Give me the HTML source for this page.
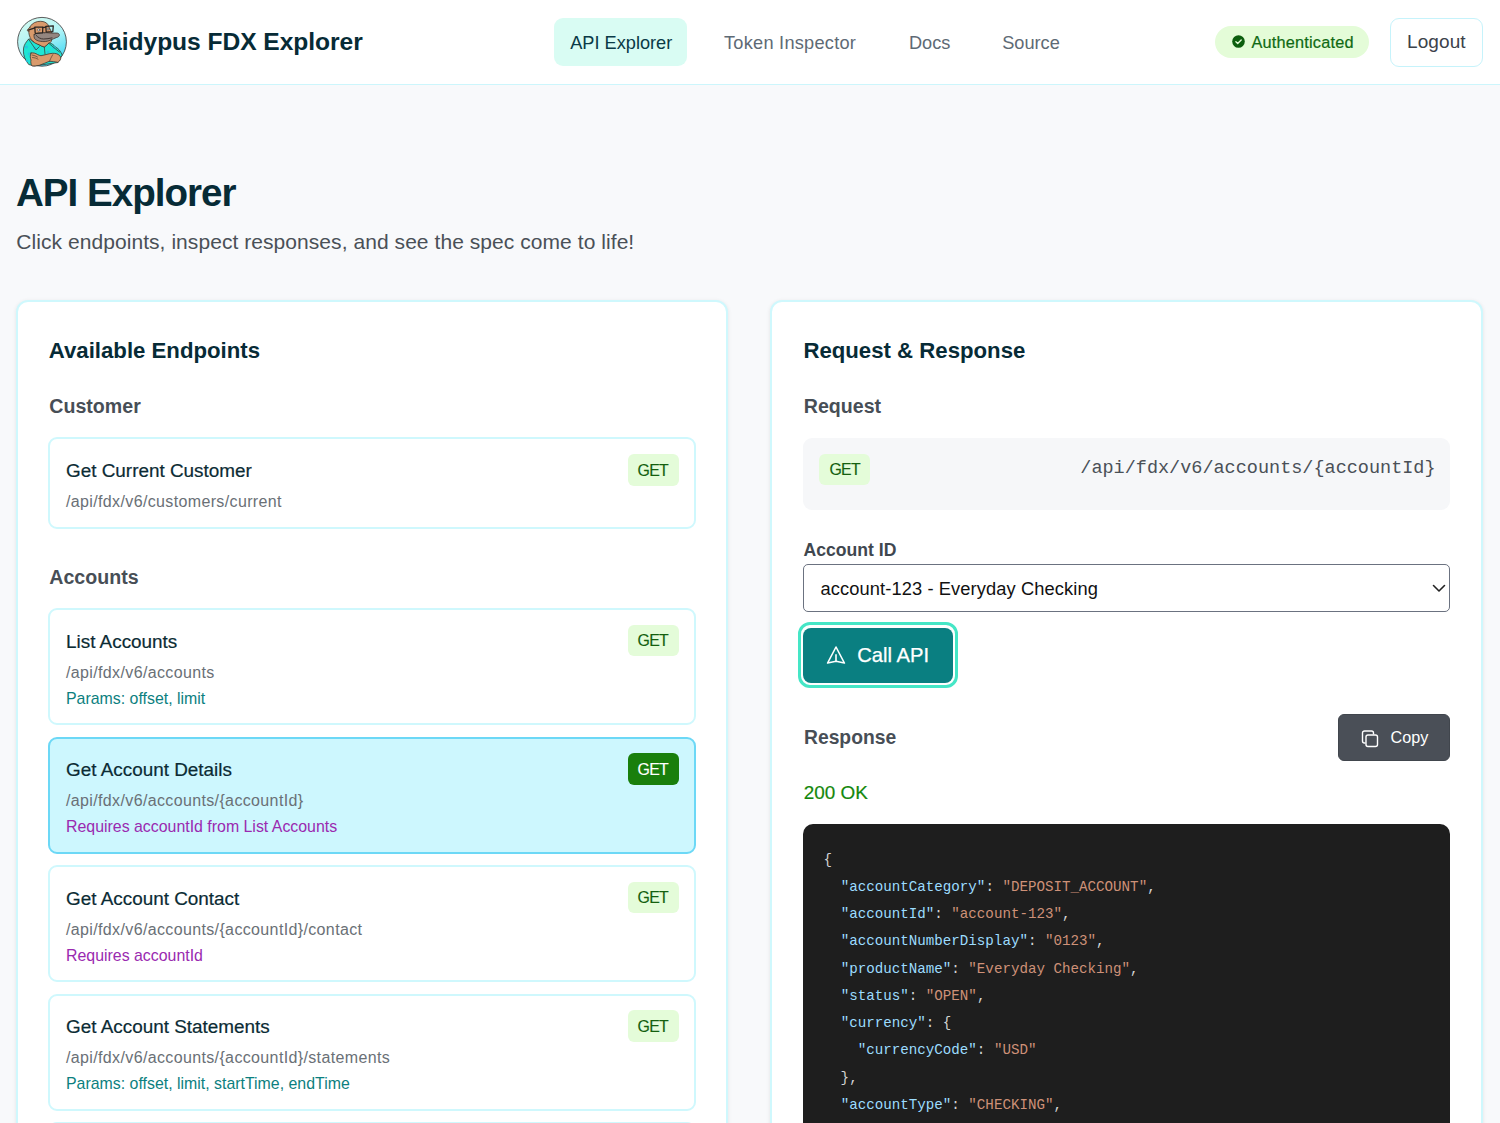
<!DOCTYPE html>
<html><head><meta charset="utf-8">
<style>
*{box-sizing:border-box;margin:0;padding:0}
html,body{width:1500px;height:1123px;overflow:hidden}
body{background:#f8f9fb;font-family:"Liberation Sans",sans-serif;position:relative}
.abs{position:absolute;white-space:nowrap}
</style></head><body>
<div class="abs" style="left:0.00px;top:0.00px;width:1500.00px;height:85.00px;background:#fff;border-bottom:1px solid #ccf6fc;"></div>
<svg class="abs" style="left:14px;top:14px" width="56" height="56" viewBox="0 0 56 56">
<defs>
<linearGradient id="lg" x1="0.3" y1="0.05" x2="0.75" y2="0.95"><stop offset="0" stop-color="#cdf9f1"/><stop offset="0.45" stop-color="#b0f3f6"/><stop offset="1" stop-color="#3bd8f5"/></linearGradient>
</defs>
<circle cx="28" cy="27.8" r="24.4" fill="url(#lg)" stroke="#4a4a4a" stroke-width="0.9"/>
<g stroke="#3a302b" stroke-width="0.75" stroke-linejoin="round" stroke-linecap="round">
  <!-- shirt -->
  <path d="M14.7 25 C12 28 10 31 9.6 34 C9 38 9.8 43 12 46.5 L14.7 50.5 L20 52 L44 48.5 L48.2 41 C46.5 37 44.5 34.5 42 33.5 C40 31 37.5 29.5 35.3 28.6 L30.3 33 L25.3 31 Z" fill="#1fe6d4"/>
  <g fill="#2bbfe3" stroke="none" opacity="0.75">
    <circle cx="12.5" cy="33" r="1.6"/><circle cx="15" cy="40" r="1.4"/><circle cx="21" cy="34" r="1.5"/>
    <circle cx="40" cy="33.5" r="1.6"/><circle cx="34" cy="38" r="1.3"/><circle cx="13" cy="47" r="1.2"/><circle cx="43" cy="40" r="1.2"/>
  </g>
  <path d="M14.7 25.3 L22 36 L25.3 32.7 M34 28.7 L42 35.3 L45.5 38 M30.3 33 L31 40" fill="none" stroke-width="0.7"/>
  <!-- head + neck -->
  <path d="M19 27.5 C16.5 25.5 15.2 22 14.8 18.5 C14.5 16 14.8 14 16.5 12 C18.5 9 22.5 7.2 26.6 7.3 C30 7.4 32.5 8.5 33.8 10.5 L38 19 L37.5 27 C36.5 28.5 35.5 29.5 35.3 28.6 C33.5 30.5 32 32 30.3 33 C28.5 32.5 26.5 31.8 25.3 30.8 C23 30 20.5 29 19 27.5 Z" fill="#d99a6c"/>
  <path d="M16.5 13.2 C15 14 13.6 15 13.2 16.5 C13.8 17.3 14.6 17.5 15.3 17.3" fill="#d99a6c" stroke-width="0.6"/>
  <!-- bill -->
  <path d="M20.1 20.7 C22 19.3 24.5 18.7 26.8 18.6 C30.5 18.4 34.5 18.9 38 19.1 C40 19.1 42 18.9 43.4 19.1 C45 19.5 45.8 20.6 45.2 21.8 C44.6 23 43.4 23.4 42.8 23.4 C40.5 24.3 38.5 25.3 36.7 26 C34.5 27 32.3 27.6 30 27.6 C27.5 27.6 25.7 27.3 24.1 26.8 C22.3 26.2 20.8 25.2 20.4 24.2 C20 23 19.8 21.6 20.1 20.7 Z" fill="#948680"/>
  <path d="M22 21.2 C24 23.5 26.5 25 29.5 25 C32.5 25 35.5 24.5 38 23.9" fill="none" stroke-width="0.9"/>
  <circle cx="30.4" cy="18.9" r="0.45" fill="#3a302b" stroke="none"/>
  <!-- glasses -->
  <g fill="none" stroke="#2a2421" stroke-width="1.25">
    <path d="M20.8 13.2 L28.8 13.0 L28.6 19.0 L21.2 19.3 Z"/>
    <path d="M31.8 12.3 L39.3 11.9 L38.8 17.6 L32.2 18.2 Z"/>
    <path d="M28.8 13.6 L31.8 13.2 M20.8 13.8 L14.2 16.2"/>
  </g>
  <circle cx="24.7" cy="15.9" r="1.15" fill="#e8e8e8" stroke="#3b3b3b" stroke-width="0.55"/>
  <circle cx="34.1" cy="15" r="1.05" fill="#e8e8e8" stroke="#3b3b3b" stroke-width="0.55"/>
  <!-- arms -->
  <path d="M17 39 C19 38.5 21.5 39.2 23.5 40.5 C25 41.2 26 41.7 27 41.7 C31 41 35 39.5 38.7 39.3 C41.5 39.2 44 40 45.3 41.3 C46.5 42.5 47 43.8 46.7 44.7 C46.2 46.5 45 47.8 43.7 48.3 C41 47.8 38 47.3 35.3 47.3 C32 48.5 28.5 50.3 25.3 51.3 C22.5 52 20 52.2 18 52 C16.8 50 16.6 48 17 46 C16.2 44 15.8 42 17 39 Z" fill="#d99a6c"/>
  <path d="M38.7 40.7 C37.5 43 36 45.5 35.3 47.7 M18 41 C20 41.3 22 42 23.5 43 M18.5 43.5 C20.5 43.6 22.5 44.2 24 45.2" fill="none" stroke-width="0.6"/>
</g>
</svg>
<div class="abs" style="left:85.00px;top:26.49px;font-size:24.6px;line-height:31.98px;font-weight:700;color:#072b36;font-family:'Liberation Sans',sans-serif;letter-spacing:-0.05px;">Plaidypus FDX Explorer</div>
<div class="abs" style="left:554.00px;top:18.00px;width:133.00px;height:48.00px;background:#d9fcf3;border-radius:9px;"></div>
<div class="abs" style="left:570.20px;top:32.16px;font-size:18.2px;line-height:23.66px;font-weight:400;color:#0a3a46;font-family:'Liberation Sans',sans-serif;">API Explorer</div>
<div class="abs" style="left:724.00px;top:32.16px;font-size:18.2px;line-height:23.66px;font-weight:400;color:#5e6a75;font-family:'Liberation Sans',sans-serif;letter-spacing:0.25px;">Token Inspector</div>
<div class="abs" style="left:908.90px;top:32.16px;font-size:18.2px;line-height:23.66px;font-weight:400;color:#5e6a75;font-family:'Liberation Sans',sans-serif;">Docs</div>
<div class="abs" style="left:1002.20px;top:32.16px;font-size:18.2px;line-height:23.66px;font-weight:400;color:#5e6a75;font-family:'Liberation Sans',sans-serif;">Source</div>
<div class="abs" style="left:1215.00px;top:26.00px;width:154.00px;height:32.00px;background:#e4fcd8;border-radius:16px;"></div>
<svg class="abs" style="left:1231.5px;top:35px" width="13" height="13" viewBox="0 0 13 13"><circle cx="6.5" cy="6.5" r="6.3" fill="#0c5e0e"/><path d="M3.9 6.8 L5.7 8.4 L9.2 4.9" fill="none" stroke="#e4fcd8" stroke-width="1.4" stroke-linecap="round" stroke-linejoin="round"/></svg>
<div class="abs" style="left:1251.50px;top:32.06px;font-size:16.3px;line-height:21.19px;font-weight:400;color:#0f6a13;font-family:'Liberation Sans',sans-serif;letter-spacing:0.2px;-webkit-text-stroke:0.2px #0f6a13;">Authenticated</div>
<div class="abs" style="left:1390.00px;top:17.50px;width:93.00px;height:49.00px;background:#fff;border:1.5px solid #c6f3fb;border-radius:9px;"></div>
<div class="abs" style="left:1407.00px;top:30.07px;font-size:19px;line-height:24.7px;font-weight:400;color:#3b424a;font-family:'Liberation Sans',sans-serif;letter-spacing:0.1px;">Logout</div>
<div class="abs" style="left:16.00px;top:168.14px;font-size:38.6px;line-height:50.18px;font-weight:700;color:#072b36;font-family:'Liberation Sans',sans-serif;letter-spacing:-1.0px;">API Explorer</div>
<div class="abs" style="left:16.30px;top:228.47px;font-size:21px;line-height:27.3px;font-weight:400;color:#4a5057;font-family:'Liberation Sans',sans-serif;letter-spacing:0.06px;">Click endpoints, inspect responses, and see the spec come to life!</div>
<div class="abs" style="left:15.60px;top:299.60px;width:712.80px;height:900.40px;background:#fff;border:2px solid #cff8fd;border-radius:12px;box-shadow:0 1px 4px rgba(0,0,0,0.09);"></div>
<div class="abs" style="left:770.40px;top:299.60px;width:712.90px;height:900.40px;background:#fff;border:2px solid #cff8fd;border-radius:12px;box-shadow:0 1px 4px rgba(0,0,0,0.09);"></div>
<div class="abs" style="left:48.80px;top:336.98px;font-size:22.2px;line-height:28.86px;font-weight:700;color:#072b36;font-family:'Liberation Sans',sans-serif;">Available Endpoints</div>
<div class="abs" style="left:49.30px;top:393.67px;font-size:19.6px;line-height:25.48px;font-weight:700;color:#474e56;font-family:'Liberation Sans',sans-serif;">Customer</div>
<div class="abs" style="left:49.30px;top:564.87px;font-size:19.6px;line-height:25.48px;font-weight:700;color:#474e56;font-family:'Liberation Sans',sans-serif;">Accounts</div>
<div class="abs" style="left:48.40px;top:437.20px;width:647.90px;height:91.80px;background:#fff;border:2px solid #cff8fd;border-radius:9px;"></div>
<div class="abs" style="left:66.00px;top:459.07px;font-size:18.9px;line-height:24.57px;font-weight:400;color:#0b2b34;font-family:'Liberation Sans',sans-serif;-webkit-text-stroke:0.2px #0b2b34;">Get Current Customer</div>
<div class="abs" style="left:66.00px;top:492.16px;font-size:16px;line-height:20.8px;font-weight:400;color:#6a7076;font-family:'Liberation Sans',sans-serif;letter-spacing:0.36px;">/api/fdx/v6/customers/current</div>
<div class="abs" style="left:627.60px;top:454.10px;width:51.40px;height:31.50px;background:#e4fcd9;border-radius:6px;"></div>
<div class="abs" style="left:637.60px;top:460.56px;font-size:15.9px;line-height:20.67px;font-weight:400;color:#14600f;font-family:'Liberation Sans',sans-serif;letter-spacing:-0.75px;-webkit-text-stroke:0.15px #14600f;">GET</div>
<div class="abs" style="left:48.40px;top:608.00px;width:647.90px;height:117.30px;background:#fff;border:2px solid #cff8fd;border-radius:9px;"></div>
<div class="abs" style="left:66.00px;top:629.87px;font-size:18.9px;line-height:24.57px;font-weight:400;color:#0b2b34;font-family:'Liberation Sans',sans-serif;-webkit-text-stroke:0.2px #0b2b34;">List Accounts</div>
<div class="abs" style="left:66.00px;top:662.96px;font-size:16px;line-height:20.8px;font-weight:400;color:#6a7076;font-family:'Liberation Sans',sans-serif;letter-spacing:0.36px;">/api/fdx/v6/accounts</div>
<div class="abs" style="left:66.00px;top:688.56px;font-size:15.9px;line-height:20.67px;font-weight:400;color:#0c7f80;font-family:'Liberation Sans',sans-serif;">Params: offset, limit</div>
<div class="abs" style="left:627.60px;top:624.90px;width:51.40px;height:31.50px;background:#e4fcd9;border-radius:6px;"></div>
<div class="abs" style="left:637.60px;top:631.36px;font-size:15.9px;line-height:20.67px;font-weight:400;color:#14600f;font-family:'Liberation Sans',sans-serif;letter-spacing:-0.75px;-webkit-text-stroke:0.15px #14600f;">GET</div>
<div class="abs" style="left:48.40px;top:736.50px;width:647.90px;height:117.30px;background:#cdf7fe;border:2px solid #6cd8f6;border-radius:9px;"></div>
<div class="abs" style="left:66.00px;top:758.37px;font-size:18.9px;line-height:24.57px;font-weight:400;color:#0b2b34;font-family:'Liberation Sans',sans-serif;-webkit-text-stroke:0.2px #0b2b34;">Get Account Details</div>
<div class="abs" style="left:66.00px;top:791.46px;font-size:16px;line-height:20.8px;font-weight:400;color:#6a7076;font-family:'Liberation Sans',sans-serif;letter-spacing:0.36px;">/api/fdx/v6/accounts/{accountId}</div>
<div class="abs" style="left:66.00px;top:817.06px;font-size:15.9px;line-height:20.67px;font-weight:400;color:#9a2ab0;font-family:'Liberation Sans',sans-serif;">Requires accountId from List Accounts</div>
<div class="abs" style="left:627.60px;top:753.40px;width:51.40px;height:31.50px;background:#197f0c;border-radius:6px;"></div>
<div class="abs" style="left:637.60px;top:759.86px;font-size:15.9px;line-height:20.67px;font-weight:400;color:#ffffff;font-family:'Liberation Sans',sans-serif;letter-spacing:-0.75px;-webkit-text-stroke:0.15px #fff;">GET</div>
<div class="abs" style="left:48.40px;top:865.00px;width:647.90px;height:117.30px;background:#fff;border:2px solid #cff8fd;border-radius:9px;"></div>
<div class="abs" style="left:66.00px;top:886.87px;font-size:18.9px;line-height:24.57px;font-weight:400;color:#0b2b34;font-family:'Liberation Sans',sans-serif;-webkit-text-stroke:0.2px #0b2b34;">Get Account Contact</div>
<div class="abs" style="left:66.00px;top:919.96px;font-size:16px;line-height:20.8px;font-weight:400;color:#6a7076;font-family:'Liberation Sans',sans-serif;letter-spacing:0.36px;">/api/fdx/v6/accounts/{accountId}/contact</div>
<div class="abs" style="left:66.00px;top:945.56px;font-size:15.9px;line-height:20.67px;font-weight:400;color:#9a2ab0;font-family:'Liberation Sans',sans-serif;">Requires accountId</div>
<div class="abs" style="left:627.60px;top:881.90px;width:51.40px;height:31.50px;background:#e4fcd9;border-radius:6px;"></div>
<div class="abs" style="left:637.60px;top:888.36px;font-size:15.9px;line-height:20.67px;font-weight:400;color:#14600f;font-family:'Liberation Sans',sans-serif;letter-spacing:-0.75px;-webkit-text-stroke:0.15px #14600f;">GET</div>
<div class="abs" style="left:48.40px;top:993.50px;width:647.90px;height:117.30px;background:#fff;border:2px solid #cff8fd;border-radius:9px;"></div>
<div class="abs" style="left:66.00px;top:1015.37px;font-size:18.9px;line-height:24.57px;font-weight:400;color:#0b2b34;font-family:'Liberation Sans',sans-serif;-webkit-text-stroke:0.2px #0b2b34;">Get Account Statements</div>
<div class="abs" style="left:66.00px;top:1048.46px;font-size:16px;line-height:20.8px;font-weight:400;color:#6a7076;font-family:'Liberation Sans',sans-serif;letter-spacing:0.36px;">/api/fdx/v6/accounts/{accountId}/statements</div>
<div class="abs" style="left:66.00px;top:1074.06px;font-size:15.9px;line-height:20.67px;font-weight:400;color:#0c7f80;font-family:'Liberation Sans',sans-serif;">Params: offset, limit, startTime, endTime</div>
<div class="abs" style="left:627.60px;top:1010.40px;width:51.40px;height:31.50px;background:#e4fcd9;border-radius:6px;"></div>
<div class="abs" style="left:637.60px;top:1016.86px;font-size:15.9px;line-height:20.67px;font-weight:400;color:#14600f;font-family:'Liberation Sans',sans-serif;letter-spacing:-0.75px;-webkit-text-stroke:0.15px #14600f;">GET</div>
<div class="abs" style="left:48.40px;top:1122.00px;width:647.90px;height:117.30px;background:#fff;border:2px solid #cff8fd;border-radius:9px;"></div>
<div class="abs" style="left:66.00px;top:1143.87px;font-size:18.9px;line-height:24.57px;font-weight:400;color:#0b2b34;font-family:'Liberation Sans',sans-serif;-webkit-text-stroke:0.2px #0b2b34;">Get Account Transactions</div>
<div class="abs" style="left:66.00px;top:1176.96px;font-size:16px;line-height:20.8px;font-weight:400;color:#6a7076;font-family:'Liberation Sans',sans-serif;letter-spacing:0.36px;">/api/fdx/v6/accounts/{accountId}/transactions</div>
<div class="abs" style="left:66.00px;top:1202.56px;font-size:15.9px;line-height:20.67px;font-weight:400;color:#0c7f80;font-family:'Liberation Sans',sans-serif;">Params</div>
<div class="abs" style="left:627.60px;top:1138.90px;width:51.40px;height:31.50px;background:#e4fcd9;border-radius:6px;"></div>
<div class="abs" style="left:637.60px;top:1145.36px;font-size:15.9px;line-height:20.67px;font-weight:400;color:#14600f;font-family:'Liberation Sans',sans-serif;letter-spacing:-0.75px;-webkit-text-stroke:0.15px #14600f;">GET</div>
<div class="abs" style="left:803.40px;top:336.98px;font-size:22.2px;line-height:28.86px;font-weight:700;color:#072b36;font-family:'Liberation Sans',sans-serif;">Request &amp; Response</div>
<div class="abs" style="left:803.80px;top:393.67px;font-size:19.6px;line-height:25.48px;font-weight:700;color:#474e56;font-family:'Liberation Sans',sans-serif;">Request</div>
<div class="abs" style="left:803.20px;top:437.70px;width:646.50px;height:72.80px;background:#f6f7f9;border-radius:9px;"></div>
<div class="abs" style="left:819.20px;top:453.50px;width:50.70px;height:31.10px;background:#e4fcd9;border-radius:6px;"></div>
<div class="abs" style="left:829.50px;top:459.76px;font-size:15.9px;line-height:20.67px;font-weight:400;color:#14600f;font-family:'Liberation Sans',sans-serif;letter-spacing:-0.75px;-webkit-text-stroke:0.15px #14600f;">GET</div>
<div class="abs" style="left:1080.30px;top:457.34px;font-size:18.5px;line-height:24.05px;font-weight:400;color:#4a5057;font-family:'Liberation Mono',monospace;">/api/fdx/v6/accounts/{accountId}</div>
<div class="abs" style="left:803.60px;top:538.76px;font-size:17.6px;line-height:22.88px;font-weight:700;color:#40474f;font-family:'Liberation Sans',sans-serif;">Account ID</div>
<div class="abs" style="left:803.30px;top:563.60px;width:646.40px;height:48.20px;background:#fff;border:1.5px solid #6b7280;border-radius:5px;"></div>
<div class="abs" style="left:820.50px;top:576.76px;font-size:18.3px;line-height:23.79px;font-weight:400;color:#111111;font-family:'Liberation Sans',sans-serif;letter-spacing:0.1px;">account-123 - Everyday Checking</div>
<svg class="abs" style="left:1431px;top:581.8px" width="16" height="12" viewBox="0 0 16 12"><path d="M2.5 3.5 L8 9 L13.5 3.5" fill="none" stroke="#222" stroke-width="1.6" stroke-linecap="round" stroke-linejoin="round"/></svg>
<div class="abs" style="left:797.90px;top:622.40px;width:160.00px;height:65.50px;border:3.2px solid #45e6c6;border-radius:12px;"></div>
<div class="abs" style="left:803.30px;top:627.70px;width:149.50px;height:54.90px;background:#0a7f81;border-radius:8px;"></div>
<svg class="abs" style="left:826px;top:645px" width="20" height="20" viewBox="0 0 20 20"><path d="M10 2 L18.4 18 L10 16.3 L1.6 18 Z" fill="none" stroke="#fff" stroke-width="1.6" stroke-linejoin="round"/><path d="M10 9.2 L10 16.3" stroke="#fff" stroke-width="1.6"/></svg>
<div class="abs" style="left:857.20px;top:642.37px;font-size:20.2px;line-height:26.26px;font-weight:400;color:#ffffff;font-family:'Liberation Sans',sans-serif;-webkit-text-stroke:0.25px #fff;">Call API</div>
<div class="abs" style="left:804.00px;top:725.47px;font-size:19.3px;line-height:25.09px;font-weight:700;color:#474e56;font-family:'Liberation Sans',sans-serif;">Response</div>
<div class="abs" style="left:1337.80px;top:714.10px;width:112.20px;height:46.80px;background:#4a4f57;border:1px solid #41464d;border-radius:6px;"></div>
<svg class="abs" style="left:1360px;top:729px" width="20" height="20" viewBox="0 0 20 20"><path d="M5.5 14 H4.5 A2 2 0 0 1 2.5 12 V4 A2 2 0 0 1 4.5 2 H11.5 A2 2 0 0 1 13.5 4 V5.5" fill="none" stroke="#fff" stroke-width="1.4"/><rect x="6" y="6" width="11.5" height="11.5" rx="2" fill="none" stroke="#fff" stroke-width="1.4"/></svg>
<div class="abs" style="left:1390.50px;top:726.76px;font-size:16.2px;line-height:21.06px;font-weight:400;color:#ffffff;font-family:'Liberation Sans',sans-serif;">Copy</div>
<div class="abs" style="left:803.80px;top:780.97px;font-size:18.9px;line-height:24.57px;font-weight:400;color:#13870a;font-family:'Liberation Sans',sans-serif;-webkit-text-stroke:0.2px #13870a;">200 OK</div>
<div class="abs" style="left:803.30px;top:824.20px;width:647.00px;height:375.80px;background:#1e1e1e;border-radius:10px;"></div>
<div class="abs" style="left:823.60px;top:846.59px;font-size:14.2px;line-height:27.25px;font-weight:400;color:#d4d4d4;font-family:'Liberation Mono',monospace;white-space:pre;"><span style="color:#d4d4d4">{</span></div>
<div class="abs" style="left:823.60px;top:873.84px;font-size:14.2px;line-height:27.25px;font-weight:400;color:#d4d4d4;font-family:'Liberation Mono',monospace;white-space:pre;"><span style="color:#d4d4d4">  </span><span style="color:#9cdcfe">"accountCategory"</span><span style="color:#d4d4d4">: </span><span style="color:#ce9178">"DEPOSIT_ACCOUNT"</span><span style="color:#d4d4d4">,</span></div>
<div class="abs" style="left:823.60px;top:901.09px;font-size:14.2px;line-height:27.25px;font-weight:400;color:#d4d4d4;font-family:'Liberation Mono',monospace;white-space:pre;"><span style="color:#d4d4d4">  </span><span style="color:#9cdcfe">"accountId"</span><span style="color:#d4d4d4">: </span><span style="color:#ce9178">"account-123"</span><span style="color:#d4d4d4">,</span></div>
<div class="abs" style="left:823.60px;top:928.34px;font-size:14.2px;line-height:27.25px;font-weight:400;color:#d4d4d4;font-family:'Liberation Mono',monospace;white-space:pre;"><span style="color:#d4d4d4">  </span><span style="color:#9cdcfe">"accountNumberDisplay"</span><span style="color:#d4d4d4">: </span><span style="color:#ce9178">"0123"</span><span style="color:#d4d4d4">,</span></div>
<div class="abs" style="left:823.60px;top:955.59px;font-size:14.2px;line-height:27.25px;font-weight:400;color:#d4d4d4;font-family:'Liberation Mono',monospace;white-space:pre;"><span style="color:#d4d4d4">  </span><span style="color:#9cdcfe">"productName"</span><span style="color:#d4d4d4">: </span><span style="color:#ce9178">"Everyday Checking"</span><span style="color:#d4d4d4">,</span></div>
<div class="abs" style="left:823.60px;top:982.84px;font-size:14.2px;line-height:27.25px;font-weight:400;color:#d4d4d4;font-family:'Liberation Mono',monospace;white-space:pre;"><span style="color:#d4d4d4">  </span><span style="color:#9cdcfe">"status"</span><span style="color:#d4d4d4">: </span><span style="color:#ce9178">"OPEN"</span><span style="color:#d4d4d4">,</span></div>
<div class="abs" style="left:823.60px;top:1010.09px;font-size:14.2px;line-height:27.25px;font-weight:400;color:#d4d4d4;font-family:'Liberation Mono',monospace;white-space:pre;"><span style="color:#d4d4d4">  </span><span style="color:#9cdcfe">"currency"</span><span style="color:#d4d4d4">: {</span></div>
<div class="abs" style="left:823.60px;top:1037.34px;font-size:14.2px;line-height:27.25px;font-weight:400;color:#d4d4d4;font-family:'Liberation Mono',monospace;white-space:pre;"><span style="color:#d4d4d4">    </span><span style="color:#9cdcfe">"currencyCode"</span><span style="color:#d4d4d4">: </span><span style="color:#ce9178">"USD"</span></div>
<div class="abs" style="left:823.60px;top:1064.59px;font-size:14.2px;line-height:27.25px;font-weight:400;color:#d4d4d4;font-family:'Liberation Mono',monospace;white-space:pre;"><span style="color:#d4d4d4">  },</span></div>
<div class="abs" style="left:823.60px;top:1091.84px;font-size:14.2px;line-height:27.25px;font-weight:400;color:#d4d4d4;font-family:'Liberation Mono',monospace;white-space:pre;"><span style="color:#d4d4d4">  </span><span style="color:#9cdcfe">"accountType"</span><span style="color:#d4d4d4">: </span><span style="color:#ce9178">"CHECKING"</span><span style="color:#d4d4d4">,</span></div>
<div class="abs" style="left:823.60px;top:1119.09px;font-size:14.2px;line-height:27.25px;font-weight:400;color:#d4d4d4;font-family:'Liberation Mono',monospace;white-space:pre;"><span style="color:#d4d4d4">  </span><span style="color:#9cdcfe">"balanceAsOf"</span><span style="color:#d4d4d4">: </span><span style="color:#ce9178">"2024-01-15T10:30:00Z"</span><span style="color:#d4d4d4">,</span></div>
</body></html>
